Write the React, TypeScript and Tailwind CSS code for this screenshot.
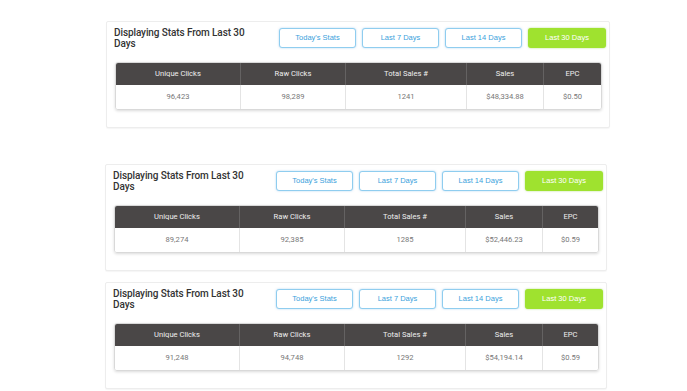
import React from 'react';

const stats = [
  { unique: '96,423', raw: '98,289', total: '1241', sales: '$48,334.88', epc: '$0.50', cls: 'ml-[106px] mt-[21px] w-[504px]' },
  { unique: '89,274', raw: '92,385', total: '1285', sales: '$52,446.23', epc: '$0.59', cls: 'ml-[105px] mt-[36px] w-[502px]' },
  { unique: '91,248', raw: '94,748', total: '1292', sales: '$54,194.14', epc: '$0.59', cls: 'ml-[105px] mt-[11px] w-[502px]' },
];

const buttons = ["Today's Stats", 'Last 7 Days', 'Last 14 Days', 'Last 30 Days'];
const heads = ['Unique Clicks', 'Raw Clicks', 'Total Sales #', 'Sales', 'EPC'];

const StatsPanel = ({ row }: { row: (typeof stats)[number] }) => {
  const values = [row.unique, row.raw, row.total, row.sales, row.epc];
  return (
    <div className={`${row.cls} h-[107px] border border-[#ededed] rounded-[2px] bg-white pl-[7px] pr-[3px] pt-[6px] shadow-[0_1px_1px_rgba(0,0,0,0.04)]`}>
      {/* Titulo y filtros */}
      <div className="flex items-center justify-between h-[20px]">
        <h2 className="w-[140px] text-[10px] leading-[10.5px] font-medium tracking-[-0.1px] text-[#333] font-['Roboto',sans-serif] mt-[1px]">
          Displaying Stats From Last 30 Days
        </h2>
        <div className="flex gap-[6px]">
          {buttons.map((b, i) =>
            i === 3 ? (
              <button key={b} className="w-[78px] h-[20px] rounded-[3px] bg-[#9fe22f] text-white text-[7.5px] font-['Liberation_Sans',sans-serif] shadow-[0_0_2px_rgba(120,190,40,0.6)]">
                {b}
              </button>
            ) : (
              <button key={b} className="w-[77px] h-[20px] rounded-[3px] border-[1.5px] border-[#8fcdef] bg-white text-[#3aa2dc] text-[7.5px] font-['Liberation_Sans',sans-serif] shadow-[0_0_2px_rgba(90,170,230,0.5)]">
                {b}
              </button>
            )
          )}
        </div>
      </div>

      {/* Tabla */}
      <div className="mt-[14px] mr-[4px] ml-[1px] rounded-[3px] overflow-hidden border border-[#d9d9d9] shadow-[0_1px_3px_rgba(0,0,0,0.15)] font-['Roboto',sans-serif]">
        <div className="grid grid-cols-[125px_105px_121px_77px_1fr] bg-[#4a4747] h-[22px]">
          {heads.map((h, i) => (
            <div key={h} className={`flex items-center justify-center text-[#eeeeee] text-[7.6px] font-normal ${i < 4 ? 'border-r border-[#646262]' : ''}`}>
              {h}
            </div>
          ))}
        </div>
        <div className="grid grid-cols-[125px_105px_121px_77px_1fr] bg-white h-[24px]">
          {values.map((v, i) => (
            <div key={i} className={`flex items-center justify-center text-[#777] text-[7.6px] font-normal ${i < 4 ? 'border-r border-[#e4e4e4]' : ''}`}>
              {v}
            </div>
          ))}
        </div>
      </div>
    </div>
  );
};

export default function App() {
  return (
    <div className="w-[687px] h-[391px] bg-white overflow-hidden flex flex-col">
      {stats.map((s, i) => (
        <StatsPanel key={i} row={s} />
      ))}
    </div>
  );
}
